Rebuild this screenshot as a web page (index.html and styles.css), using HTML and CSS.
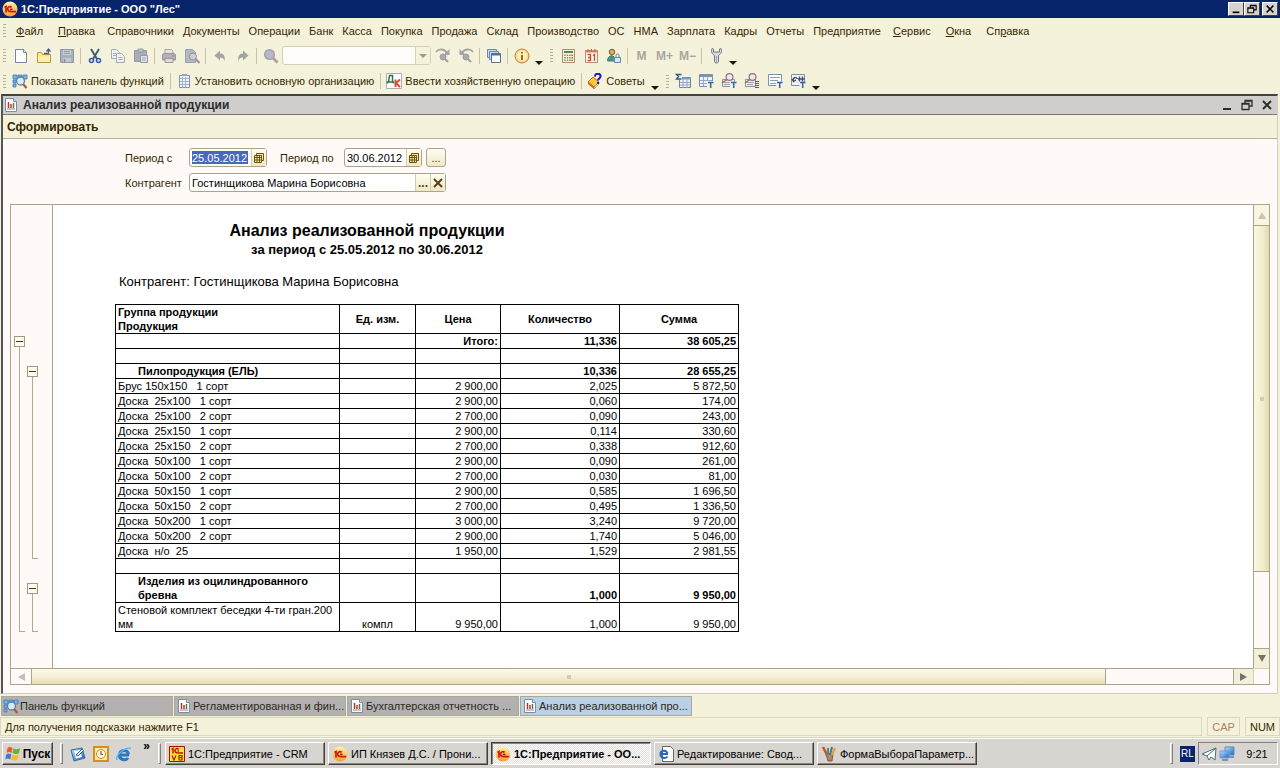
FILE: index.html
```html
<!DOCTYPE html>
<html lang="ru">
<head>
<meta charset="utf-8">
<title>1С:Предприятие - ООО "Лес"</title>
<link rel="stylesheet" href="styles.css">
</head>
<body>
<svg class="sprite" aria-hidden="true">
  <defs>
    <linearGradient id="gold" x1="0" y1="0" x2="0" y2="1"><stop offset="0" stop-color="#fff3b0"/><stop offset="1" stop-color="#f0a030"/></linearGradient>
    <linearGradient id="sky" x1="0" y1="0" x2="1" y2="1"><stop offset="0" stop-color="#b8e4ff"/><stop offset="1" stop-color="#1c62c0"/></linearGradient>
  </defs>
  <symbol id="i-1c" viewBox="0 0 16 16"><circle cx="8" cy="8" r="7.5" fill="url(#gold)"/><path d="M2.500 6.500l1.500-1v6M9.500 6.500C8.500 5 5.700 5.500 5.700 8s2 2.700 4 2.700h4.500M10.500 8.300H8" fill="none" stroke="#d01808" stroke-width="1.700"/></symbol>
  <symbol id="i-1cv8" viewBox="0 0 16 16"><path d="M.5.5h15v15H.5z" fill="#ffdf38" stroke="#a01010"/><path d="M2.500 3.500L4 2.500V7.500M9.500 3.500c-1-1.500-3.500-1-3.500 1s1 2.500 3 2.500h5M10 5H8.500" fill="none" stroke="#c81808" stroke-width="1.500"/><path d="M3 9.500l2 4.500 2-4.500M10 9.500h3v2h-3zM10 11.500h3V14h-3z" fill="none" stroke="#b01808" stroke-width="1.200"/></symbol>
  <symbol id="i-report" viewBox="0 0 16 16"><path d="M2.500 1.500h8l3 3v10h-11z" fill="#fff" stroke="#7d8ca4"/><path d="M10.500 1.500v3h3" fill="#d8e0ee" stroke="#7d8ca4"/><path d="M5.500 5v6" stroke="#b03820" stroke-width="1.500"/><path d="M8 7v4" stroke="#c03030" stroke-width="1.500"/><path d="M10.500 6v5" stroke="#507850" stroke-width="1.500"/><path d="M4 12h8" stroke="#888"/></symbol>
  <symbol id="i-new" viewBox="0 0 16 16"><path d="M2.500 1.500h8l3 3v10h-11z" fill="#fff" stroke="#7388ad"/><path d="M10.500 1.500v3h3" fill="#d4e0f4" stroke="#7388ad"/></symbol>
  <symbol id="i-open" viewBox="0 0 16 16"><path d="M1.500 4.500h4l1 2h8v8h-13z" fill="#ffe58c" stroke="#b99544"/><path d="M2 8.500h12v5.500H2z" fill="#ffefac"/><path d="M8 5.500h4.500V1.500M10.500 3.500l2-2.500 2 2.500" fill="none" stroke="#4c6480" stroke-width="1.300"/></symbol>
  <symbol id="i-save" viewBox="0 0 16 16"><path d="M1.500 1.500h13v13h-13z" fill="#a9afbb" stroke="#8f97a8"/><path d="M4 2h8v5H4z" fill="#c9ccd4"/><path d="M5 3.500h6M5 5.500h6" stroke="#959cab"/><path d="M4 10h8v4H4z" fill="#c4c8d0"/><path d="M5.500 11v3" stroke="#858c9c" stroke-width="1.500"/></symbol>
  <symbol id="i-cut" viewBox="0 0 16 16"><path d="M4 1l6 10M12 1L6 11" stroke="#41597c" stroke-width="1.900" fill="none"/><circle cx="4.500" cy="12.500" r="2" fill="none" stroke="#2d5fae" stroke-width="1.600"/><circle cx="11.500" cy="12.500" r="2" fill="none" stroke="#2d5fae" stroke-width="1.600"/></symbol>
  <symbol id="i-copy" viewBox="0 0 16 16"><g fill="#f0f0ee" stroke="#a6abb8"><path d="M1.500 1.500h5l3 3v6h-8z"/><path d="M6.500 5.500h5l3 3v6h-8z"/></g><path d="M3 5.500h3M3 7.500h3M8.500 9.500h4M8.500 11.500h4" stroke="#a6abb8"/></symbol>
  <symbol id="i-paste" viewBox="0 0 16 16"><path d="M1.500 2.500h12v11h-12z" fill="#a9adb8" stroke="#9298a6"/><path d="M5 1h5v3H5z" fill="#c8c8cc" stroke="#9298a6"/><path d="M7.500 7.500h7v7h-7z" fill="#dfe1e6" stroke="#9298a6"/><path d="M9 10h4M9 12h4" stroke="#a0a5b2"/></symbol>
  <symbol id="i-print" viewBox="0 0 16 16"><path d="M4 6V1.500h6.500L12 3v3" fill="#e6e4e2" stroke="#a8a3a4"/><path d="M1.500 6.500l1.500-1h10l1.500 1v5.500h-13z" fill="#b4b0b4" stroke="#98959c"/><path d="M4 10.500h8v4H4z" fill="#dedbd9" stroke="#98959c"/><path d="M11 8h2" stroke="#b07878"/></symbol>
  <symbol id="i-preview" viewBox="0 0 16 16"><path d="M1.500 1.500h7l3 3v10h-10z" fill="#b5b8c2" stroke="#9a9fac"/><circle cx="9" cy="8.500" r="3.500" fill="#cccfd6" stroke="#90939c"/><path d="M11.500 11l4 4" stroke="#9c9490" stroke-width="2.200"/></symbol>
  <symbol id="i-undo" viewBox="0 0 16 16"><path d="M2.500 7.500l5.500-5V5.500c4 0 5.500 3 4.500 8-.5-3-1.500-4-4.500-4v3z" fill="#a4a5a3"/></symbol>
  <symbol id="i-redo" viewBox="0 0 16 16"><path d="M13.500 7.500L8 2.500V5.500c-4 0-5.500 3-4.500 8 .5-3 1.500-4 4.500-4v3z" fill="#9ea89e"/></symbol>
  <symbol id="i-find" viewBox="0 0 16 16"><circle cx="6.500" cy="6.500" r="4.800" fill="#b7bac4" stroke="#a0a2ac" stroke-width="1.500"/><path d="M10 10l4.500 4.500" stroke="#b29d94" stroke-width="2.800"/></symbol>
  <symbol id="i-next" viewBox="0 0 16 16"><path d="M1 4c3-4 9-3 11 1" fill="none" stroke="#a4a4a4" stroke-width="1.800"/><path d="M14.500 1v6H8.500z" fill="#a4a4a4"/><circle cx="8" cy="9" r="3" fill="#a9abb2" stroke="#9b9ba1"/><path d="M10 11l3 3" stroke="#a99c96" stroke-width="2"/></symbol>
  <symbol id="i-prev" viewBox="0 0 16 16"><path d="M15 4C12 0 6 1 4 5" fill="none" stroke="#a4a4a4" stroke-width="1.800"/><path d="M1.500 1v6h6z" fill="#a4a4a4"/><circle cx="8" cy="9" r="3" fill="#a9abb2" stroke="#9b9ba1"/><path d="M10 11l3 3" stroke="#a99c96" stroke-width="2"/></symbol>
  <symbol id="i-windows" viewBox="0 0 16 16"><path d="M1.500 1.500h9v8h-9z" fill="#c8dcf0" stroke="#7089a8"/><path d="M3.500 3.500h9v8h-9z" fill="#c8dcf0" stroke="#7089a8"/><path d="M5.500 5.500h9v9h-9z" fill="#fff" stroke="#4e6f96"/><path d="M5 6.500h10" stroke="#4e6f96" stroke-width="2"/></symbol>
  <symbol id="i-info" viewBox="0 0 16 16"><circle cx="8" cy="8" r="7" fill="#fcd78a" stroke="#bf7c4e"/><circle cx="8" cy="8" r="5" fill="#fff0b0"/><path d="M8 4v1.500M8 7v5" stroke="#8d5a2c" stroke-width="1.800"/></symbol>
  <symbol id="i-calc" viewBox="0 0 16 16"><path d="M2.500 1.500h12v13h-12z" fill="#fdf4dd" stroke="#b08b6c"/><path d="M4 3h9v2H4z" fill="#508660"/><path d="M5 6.500v7M7.500 6.500v7M10 6.500v7" stroke="#6e9a58" stroke-width="1.500" stroke-dasharray="1.500 1"/><path d="M12.200 6.500v7" stroke="#cc5848" stroke-width="1.500" stroke-dasharray="1.500 1"/></symbol>
  <symbol id="i-calendar" viewBox="0 0 16 16"><path d="M2.500 2.500h12v12h-12z" fill="#fff6ed" stroke="#c48a70"/><path d="M2 3.500h13" stroke="#e08060" stroke-width="2"/><path d="M5 1v3M8.500 1v3M12 1v3" stroke="#a56a5c"/><path d="M4.500 6.500h3v6h-3M5 9.500h2.500M10 7.500l1.500-1v6.500" fill="none" stroke="#cf4c28" stroke-width="1.300"/></symbol>
  <symbol id="i-user" viewBox="0 0 16 16"><circle cx="6" cy="4" r="2.800" fill="#e7a55c" stroke="#6c6040"/><path d="M1.500 13c0-7 8-7 8 0z" fill="#4c9686" stroke="#497a77"/><path d="M8.500 9.500h6v5h-6z" fill="#dbe7f5" stroke="#6384ac"/><path d="M10 9V7.500c0-2 3-2 3 0V9" fill="none" stroke="#6384ac"/></symbol>
  <symbol id="i-wrench" viewBox="0 0 16 16"><path d="M4 .5C2.500 3 4 6 6.500 7.500v6c0 2 4 2 4 0v-6C13 6 14.500 3 13 .5l-1.500.5v3h-6V1z" fill="#d5dae0" stroke="#717781"/><path d="M8.500 8v6" stroke="#a2a8b0"/></symbol>
  <symbol id="i-panel" viewBox="0 0 16 16"><path d="M1 2h4v4H1zM6 2h4v4H6zM11 2h4v4h-4zM1 7h3v3H1zM1 11h3v3H1z" fill="#75b4e8" stroke="#3d79b8" stroke-width=".8"/><circle cx="8.500" cy="8" r="4" fill="#d6ecfa" stroke="#5d7fa0" stroke-width="1.300"/><path d="M11 11l3.500 4" stroke="#ac5b42" stroke-width="2.300"/></symbol>
  <symbol id="i-org" viewBox="0 0 16 16"><path d="M3.500 2.500h10v12h-10z" fill="#eef3fb" stroke="#8294b2"/><path d="M6 1h5v2H6z" fill="#93a4bf"/><path d="M4 5.500h9M4 8.500h9M4 11.500h9M6.500 4v10M9.500 4v10" stroke="#a3b1c9"/></symbol>
  <symbol id="i-dk" viewBox="0 0 16 16"><path d="M.5.500h15v15H.5z" fill="#fff" stroke="#a9adb5"/><path d="M1.500 10.500V9h1l1-6.500h3V9h1v1.500M2.500 9H7" fill="none" stroke="#287840" stroke-width="1.500"/><path d="M9.500 6.500V14M14 6.500L10 10l4 4" fill="none" stroke="#de4830" stroke-width="1.900"/></symbol>
  <symbol id="i-tips" viewBox="0 0 16 16"><path d="M1 9l5-5 6 5-5 5z" fill="#ffc838" stroke="#c06c18"/><path d="M1 9l6 5v2L1 11z" fill="#d05f18"/><path d="M7 14l5-5v2l-5 5z" fill="#f5e5c0" stroke="#a06a40" stroke-width=".6"/><path d="M8 3.500c0-4 6-3.500 5.500 0-.3 2-2.500 2-2.500 4M11 9v2" fill="none" stroke="#1b18b8" stroke-width="2"/></symbol>
  <symbol id="i-grid" viewBox="0 0 16 16"><path d="M4.500 4.500h11v10h-11z" fill="#eef3fa" stroke="#6b86ae"/><path d="M4 5.500h12" stroke="#7c9bc4" stroke-width="2"/><path d="M8 6v9M12 6v9M5 9.500h10M5 12h10" stroke="#94a7c4"/></symbol>
  <symbol id="i-sum" viewBox="0 0 16 16"><use href="#i-grid" width="16" height="16"/><path d="M0 0h7v7H0z" fill="#f5f2dc"/><path d="M6.500 1.500H1.500l2 2-2 2.500h5" fill="none" stroke="#2d5592" stroke-width="1.300"/></symbol>
  <symbol id="i-gridt" viewBox="0 0 16 16"><path d="M1.500 1.500h13v12h-13z" fill="#eef3fa" stroke="#7d90ae"/><path d="M1 3h14" stroke="#7c93b8" stroke-width="2"/><path d="M5.500 4v9M9.500 4v9M2 7.500h12M2 10.500h8" stroke="#94a7c4"/><path d="M9 8h7v8H9z" fill="#f5f2dc"/><path d="M10 9.500h5.500M12.700 9.500V15" stroke="#2d68ac" stroke-width="1.500"/></symbol>
  <symbol id="i-findt" viewBox="0 0 16 16"><path d="M1.500 6.500h12v7h-12z" fill="#e8eaf0" stroke="#8b93a4"/><path d="M3 9.500h7M3 11.500h6" stroke="#9ca4b4"/><circle cx="8.500" cy="4" r="3.400" fill="#f7e9e9" stroke="#8c7480" stroke-width="1.200"/><path d="M6 6.500L1 10" stroke="#a0705c" stroke-width="1.500"/><path d="M9 8.500h7V16H9z" fill="#f5f2dc"/><path d="M10 9.500h5.500M12.700 9.500V15" stroke="#2d68ac" stroke-width="1.500"/></symbol>
  <symbol id="i-findl" viewBox="0 0 16 16"><path d="M1.500 6.500h10v7h-10z" fill="#e8eaf0" stroke="#8b93a4"/><path d="M3 9.500h7M3 11.500h6" stroke="#9ca4b4"/><circle cx="8.500" cy="4" r="3.400" fill="#f7e9e9" stroke="#8c7480" stroke-width="1.200"/><path d="M6 6.500L1 10" stroke="#a0705c" stroke-width="1.500"/><path d="M11 8.500h4M11 10.500h4M11 12.500h4M11 14.500h4" stroke="#625a52"/></symbol>
  <symbol id="i-doct" viewBox="0 0 16 16"><path d="M1.500 1.500h13v11h-13z" fill="#fff" stroke="#7d90ae"/><path d="M3 4.500h10M3 7.500h8M3 10.500h6" stroke="#8ca0c0"/><path d="M9 8.500h7V16H9z" fill="#f5f2dc"/><path d="M10 9.500h5.500M12.700 9.500V15" stroke="#2d68ac" stroke-width="1.500"/></symbol>
  <symbol id="i-movet" viewBox="0 0 16 16"><path d="M1.500 1.500h13v11h-13z" fill="#eef2f8" stroke="#7d90ae"/><path d="M3.500 8c-1-4 3-4 4-2M2 6l1.500 2.500L6 7M9.500 3.500v5M12.500 3.500v5M8 6h6.500" fill="none" stroke="#4a4a5a" stroke-width="1.300"/><path d="M9.500 9h6v6h-6z" fill="#f5f2dc"/><path d="M10 9.500h5.500M12.700 9.500V15" stroke="#2d68ac" stroke-width="1.500"/></symbol>
  <symbol id="i-cells" viewBox="0 0 12 12"><path d="M3.500 1.500h7v7h-7z" fill="#f4e3a2" stroke="#6a5410"/><path d="M1.500 3.500h7v7h-7z" fill="#f9ecb8" stroke="#6a5410"/><path d="M1 5.500h8M1 8h8M4 3v8M6.500 3v8" stroke="#6a5410"/></symbol>
  <symbol id="i-min" viewBox="0 0 12 12"><path d="M2 10h8" stroke="currentColor" stroke-width="2"/></symbol>
  <symbol id="i-restore" viewBox="0 0 12 12"><path d="M4 4V1.500h7v5.500H8M4 2h7.500" fill="none" stroke="currentColor" stroke-width="1.300"/><path d="M1 4.500h7v6H1zM1 5h7" fill="none" stroke="currentColor" stroke-width="1.300"/></symbol>
  <symbol id="i-close" viewBox="0 0 12 12"><path d="M2 2l8 8M10 2l-8 8" stroke="currentColor" stroke-width="1.900"/></symbol>
  <symbol id="i-flag" viewBox="0 0 16 16"><path d="M2.500 2c2-1.500 3-1 5 0l-1 5c-2-1-3-1.500-5 0z" fill="#e85c28"/><path d="M8.500 2.500c2 1 4 1 6.500-.5l-1 5c-2 1.500-4 1-6.500 0z" fill="#68b034"/><path d="M1.300 8.500c2-1.500 3-1 5 0l-1 5c-2-1-3-1.500-5 0z" fill="#3c78d8"/><path d="M7.200 8.500c2 1 4 1.500 6.500 0l-1 5c-2 1.500-4 1-6.500 0z" fill="#f8bc20"/></symbol>
  <symbol id="i-desktop" viewBox="0 0 16 16"><path d="M1 4l11-2 3 10-11 3z" fill="url(#sky)" stroke="#2a6fa8"/><path d="M4 5l6-1 2 7-6 1.500z" fill="#fff"/><path d="M6 9l6-6 1.500 1.500L8 10z" fill="#e4f0f8" stroke="#346088"/></symbol>
  <symbol id="i-clock" viewBox="0 0 16 16"><path d="M1 1h14v14H1z" fill="#ffe9aa" stroke="#d68e20" stroke-width="2"/><circle cx="8" cy="8" r="4.500" fill="#fff9e0" stroke="#c88a30"/><path d="M8 5v3.500h2" fill="none" stroke="#8d6020" stroke-width="1.200"/></symbol>
  <symbol id="i-ie" viewBox="0 0 16 16"><path d="M3 9h10M12.500 8.500C12 3 4 3 3.500 9c-.3 5 6.500 6 8.500 3" fill="none" stroke="#267ac4" stroke-width="3"/><path d="M1 14C-1 10 8 1 15 2.500" fill="none" stroke="#62b4ec" stroke-width="1.500"/></symbol>
  <symbol id="i-iepage" viewBox="0 0 16 16"><path d="M4.500.5h8l3 3v12h-11z" fill="#fff" stroke="#666"/><path d="M3 8h7M9.500 7.500C8 3.500 2.500 4 2.500 8s5 5 7 2.500" fill="none" stroke="#2268bc" stroke-width="2"/></symbol>
  <symbol id="i-paint" viewBox="0 0 16 16"><path d="M5 8l7-1-1 8H7z" fill="#b08460" stroke="#805a48"/><path d="M2 1l4 8" stroke="#d44c38" stroke-width="2.500"/><path d="M7 2v7" stroke="#4c9a44" stroke-width="2"/><path d="M11 1L9 9" stroke="#4d70c0" stroke-width="2"/><path d="M14 2l-3 7" stroke="#e0a838" stroke-width="2.500"/></symbol>
  <symbol id="i-plane" viewBox="0 0 16 16"><path d="M1 8l14-6-1 12-4-3-2 3-2-4z" fill="#fff" stroke="#447078"/><path d="M15 2L6 10" stroke="#447078"/></symbol>
  <symbol id="i-net" viewBox="0 0 16 16"><path d="M6 1h9v8H6z" fill="url(#sky)" stroke="#5e88c0"/><path d="M1 5h9v7H1z" fill="url(#sky)" stroke="#7098cc"/><path d="M3 14h6M10 11h5" stroke="#7e93b8" stroke-width="2"/></symbol>
</svg>

<header class="titlebar">
  <svg class="icon"><use href="#i-1c"/></svg>
  <h1>1С:Предприятие - ООО "Лес"</h1>
  <div class="caption-buttons">
    <button aria-label="Свернуть"><svg><use href="#i-min"/></svg></button>
    <button aria-label="Восстановить"><svg><use href="#i-restore"/></svg></button>
    <button class="apart" aria-label="Закрыть"><svg><use href="#i-close"/></svg></button>
  </div>
</header>

<nav class="menu">
  <i class="grip"></i>
  <button class="key"><u>Ф</u>айл</button>
  <button class="key"><u>П</u>равка</button>
  <button>Справочники</button>
  <button>Документы</button>
  <button>Операции</button>
  <button>Банк</button>
  <button>Касса</button>
  <button>Покупка</button>
  <button>Продажа</button>
  <button>Склад</button>
  <button>Производство</button>
  <button>ОС</button>
  <button>НМА</button>
  <button>Зарплата</button>
  <button>Кадры</button>
  <button>Отчеты</button>
  <button>Предприятие</button>
  <button class="key"><u>С</u>ервис</button>
  <button class="key"><u>О</u>кна</button>
  <button class="key">Сп<u>р</u>авка</button>
</nav>

<div class="toolbar">
  <i class="grip"></i>
  <button class="tool" aria-label="Новый"><svg class="icon"><use href="#i-new"/></svg></button>
  <button class="tool" aria-label="Открыть"><svg class="icon"><use href="#i-open"/></svg></button>
  <button class="tool" aria-label="Сохранить"><svg class="icon"><use href="#i-save"/></svg></button>
  <i class="sep"></i>
  <button class="tool" aria-label="Вырезать"><svg class="icon"><use href="#i-cut"/></svg></button>
  <button class="tool" aria-label="Копировать"><svg class="icon"><use href="#i-copy"/></svg></button>
  <button class="tool" aria-label="Вставить"><svg class="icon"><use href="#i-paste"/></svg></button>
  <i class="sep"></i>
  <button class="tool" aria-label="Печать"><svg class="icon"><use href="#i-print"/></svg></button>
  <button class="tool" aria-label="Просмотр"><svg class="icon"><use href="#i-preview"/></svg></button>
  <i class="sep"></i>
  <button class="tool" aria-label="Отменить"><svg class="icon"><use href="#i-undo"/></svg></button>
  <button class="tool" aria-label="Повторить"><svg class="icon"><use href="#i-redo"/></svg></button>
  <i class="sep"></i>
  <button class="tool" aria-label="Найти"><svg class="icon"><use href="#i-find"/></svg></button>
  <div class="combo"><input type="text" aria-label="Строка поиска"><button aria-label="История поиска"><i class="down dim"></i></button></div>
  <button class="tool" aria-label="Найти далее"><svg class="icon"><use href="#i-next"/></svg></button>
  <button class="tool" aria-label="Найти назад"><svg class="icon"><use href="#i-prev"/></svg></button>
  <i class="sep"></i>
  <button class="tool" aria-label="Окна"><svg class="icon"><use href="#i-windows"/></svg></button>
  <i class="sep"></i>
  <button class="tool" aria-label="Справка"><svg class="icon"><use href="#i-info"/></svg></button>
  <button class="more" aria-label="Еще"><i class="down"></i></button>
  <i class="grip inner"></i>
  <button class="tool" aria-label="Калькулятор"><svg class="icon"><use href="#i-calc"/></svg></button>
  <button class="tool" aria-label="Календарь"><svg class="icon"><use href="#i-calendar"/></svg></button>
  <button class="tool" aria-label="Пользователи"><svg class="icon"><use href="#i-user"/></svg></button>
  <i class="sep"></i>
  <button class="tool mem">M</button>
  <button class="tool mem">M+</button>
  <button class="tool mem">M−</button>
  <i class="sep"></i>
  <button class="tool" aria-label="Настройка"><svg class="icon"><use href="#i-wrench"/></svg></button>
  <button class="more" aria-label="Еще"><i class="down"></i></button>
</div>

<div class="toolbar">
  <i class="grip"></i>
  <button class="command"><svg class="icon"><use href="#i-panel"/></svg>Показать панель функций</button>
  <i class="sep"></i>
  <button class="command"><svg class="icon"><use href="#i-org"/></svg>Установить основную организацию</button>
  <i class="sep"></i>
  <button class="command"><svg class="icon"><use href="#i-dk"/></svg>Ввести хозяйственную операцию</button>
  <i class="sep"></i>
  <button class="command"><svg class="icon"><use href="#i-tips"/></svg>Советы</button>
  <button class="more" aria-label="Еще"><i class="down"></i></button>
  <i class="grip inner"></i>
  <button class="tool" aria-label="Итоги"><svg class="icon"><use href="#i-sum"/></svg></button>
  <button class="tool" aria-label="Таблица"><svg class="icon"><use href="#i-gridt"/></svg></button>
  <button class="tool" aria-label="Отбор"><svg class="icon"><use href="#i-findt"/></svg></button>
  <button class="tool" aria-label="Список"><svg class="icon"><use href="#i-findl"/></svg></button>
  <button class="tool" aria-label="Документ"><svg class="icon"><use href="#i-doct"/></svg></button>
  <button class="tool" aria-label="Обороты"><svg class="icon"><use href="#i-movet"/></svg></button>
  <button class="more" aria-label="Еще"><i class="down"></i></button>
</div>

<main class="window">
  <div class="window-title">
    <svg class="icon"><use href="#i-report"/></svg>
    <h2>Анализ реализованной продукции</h2>
    <button aria-label="Свернуть окно"><svg><use href="#i-min"/></svg></button>
    <button aria-label="Восстановить окно"><svg><use href="#i-restore"/></svg></button>
    <button aria-label="Закрыть окно"><svg><use href="#i-close"/></svg></button>
  </div>
  <div class="commands"><button>Сформировать</button></div>

  <form class="filter">
    <div class="filter-row">
      <label for="from">Период с</label>
      <div class="field date"><input class="selected" id="from" value="25.05.2012"><button type="button" aria-label="Выбрать начало"><svg><use href="#i-cells"/></svg></button></div>
      <label class="second" for="to">Период по</label>
      <div class="field date"><input id="to" value="30.06.2012"><button type="button" aria-label="Выбрать конец"><svg><use href="#i-cells"/></svg></button></div>
      <button class="dots" type="button">...</button>
    </div>
    <div class="filter-row">
      <label for="partner">Контрагент</label>
      <div class="field partner"><input id="partner" value="Гостинщикова Марина Борисовна"><button class="pick" type="button">...</button><button type="button" aria-label="Очистить"><svg><use href="#i-close"/></svg></button></div>
    </div>
  </form>

  <section class="sheet">
    <div class="outline">
      <div class="level">
        <div class="node total"><button aria-label="Свернуть итог"></button></div>
      </div>
      <div class="level">
        <div class="node group-one"><button aria-label="Свернуть группу"></button></div>
        <div class="node group-two"><button aria-label="Свернуть группу"></button></div>
      </div>
    </div>
    <div class="page">
      <div class="heading">
        <h3>Анализ реализованной продукции</h3>
        <h4>за период с 25.05.2012 по 30.06.2012</h4>
      </div>
      <p class="subject">Контрагент: Гостинщикова Марина Борисовна</p>
      <table>
        <colgroup><col class="c-name"><col class="c-unit"><col class="c-price"><col class="c-sum"><col class="c-sum"></colgroup>
        <thead>
          <tr class="tall"><th class="name">Группа продукции<br>Продукция</th><th>Ед. изм.</th><th>Цена</th><th>Количество</th><th>Сумма</th></tr>
        </thead>
        <tbody>
          <tr class="bold"><td></td><td></td><td>Итого:</td><td>11,336</td><td>38 605,25</td></tr>
          <tr><td></td><td></td><td></td><td></td><td></td></tr>
          <tr class="bold"><td class="group">Пилопродукция (ЕЛЬ)</td><td></td><td></td><td>10,336</td><td>28 655,25</td></tr>
          <tr><td>Брус 150x150   1 сорт</td><td></td><td>2 900,00</td><td>2,025</td><td>5 872,50</td></tr>
          <tr><td>Доска  25x100   1 сорт</td><td></td><td>2 900,00</td><td>0,060</td><td>174,00</td></tr>
          <tr><td>Доска  25x100   2 сорт</td><td></td><td>2 700,00</td><td>0,090</td><td>243,00</td></tr>
          <tr><td>Доска  25x150   1 сорт</td><td></td><td>2 900,00</td><td>0,114</td><td>330,60</td></tr>
          <tr><td>Доска  25x150   2 сорт</td><td></td><td>2 700,00</td><td>0,338</td><td>912,60</td></tr>
          <tr><td>Доска  50x100   1 сорт</td><td></td><td>2 900,00</td><td>0,090</td><td>261,00</td></tr>
          <tr><td>Доска  50x100   2 сорт</td><td></td><td>2 700,00</td><td>0,030</td><td>81,00</td></tr>
          <tr><td>Доска  50x150   1 сорт</td><td></td><td>2 900,00</td><td>0,585</td><td>1 696,50</td></tr>
          <tr><td>Доска  50x150   2 сорт</td><td></td><td>2 700,00</td><td>0,495</td><td>1 336,50</td></tr>
          <tr><td>Доска  50x200   1 сорт</td><td></td><td>3 000,00</td><td>3,240</td><td>9 720,00</td></tr>
          <tr><td>Доска  50x200   2 сорт</td><td></td><td>2 900,00</td><td>1,740</td><td>5 046,00</td></tr>
          <tr><td>Доска  н/о  25</td><td></td><td>1 950,00</td><td>1,529</td><td>2 981,55</td></tr>
          <tr><td></td><td></td><td></td><td></td><td></td></tr>
          <tr class="bold tall"><td class="group">Изделия из оцилиндрованного бревна</td><td></td><td></td><td>1,000</td><td>9 950,00</td></tr>
          <tr class="tall"><td>Стеновой комплект беседки 4-ти гран.200 мм</td><td>компл</td><td>9 950,00</td><td>1,000</td><td>9 950,00</td></tr>
        </tbody>
      </table>
    </div>
    <div class="vscroll"><button aria-label="Вверх"><i class="tri up"></i></button><div class="vthumb"><i></i></div><div class="vtrack"></div><button aria-label="Вниз"><i class="tri south"></i></button></div>
    <div class="hscroll"><button aria-label="Влево"><i class="tri west"></i></button><div class="hthumb"><i></i></div><div class="htrack"></div><button aria-label="Вправо"><i class="tri east"></i></button></div>
    <div class="corner"></div>
  </section>
</main>

<nav class="tabs">
  <button class="tight"><svg class="icon"><use href="#i-panel"/></svg>Панель функций</button>
  <button><svg class="icon"><use href="#i-report"/></svg>Регламентированная и фин...</button>
  <button><svg class="icon"><use href="#i-report"/></svg>Бухгалтерская отчетность ...</button>
  <button class="active"><svg class="icon"><use href="#i-report"/></svg>Анализ реализованной про...</button>
</nav>

<div class="status"><span class="hint">Для получения подсказки нажмите F1</span><span class="off">CAP</span><span>NUM</span></div>

<footer class="taskbar">
  <button class="start"><svg class="icon"><use href="#i-flag"/></svg>Пуск</button>
  <i class="ridge"></i>
  <div class="quick">
    <button aria-label="Рабочий стол"><svg class="icon"><use href="#i-desktop"/></svg></button>
    <button aria-label="Планировщик"><svg class="icon"><use href="#i-clock"/></svg></button>
    <button aria-label="Обозреватель"><svg class="icon"><use href="#i-ie"/></svg></button>
    <button class="chevron">»</button>
  </div>
  <i class="ridge"></i>
  <div class="tasks">
    <button><svg class="icon"><use href="#i-1cv8"/></svg>1С:Предприятие - CRM</button>
    <button><svg class="icon"><use href="#i-1c"/></svg>ИП Князев Д.С. / Прони...</button>
    <button class="pressed"><svg class="icon"><use href="#i-1c"/></svg>1С:Предприятие - ОО...</button>
    <button><svg class="icon"><use href="#i-iepage"/></svg>Редактирование: Свод...</button>
    <button><svg class="icon"><use href="#i-paint"/></svg>ФормаВыбораПараметр...</button>
  </div>
  <i class="ridge"></i>
  <span class="lang">RL</span>
  <div class="tray"><svg class="icon"><use href="#i-plane"/></svg><svg class="icon"><use href="#i-net"/></svg><time>9:21</time></div>
</footer>
</body>
</html>
```
FILE: styles.css
```css
* { box-sizing: border-box; }

:root {
  --beige: #f5f2dc;
  --form: #fffaf7;
  --line: #a9a58c;
  --ink: #352800;
}

body {
  margin: 0;
  height: 100vh;
  display: flex;
  flex-direction: column;
  overflow: hidden;
  background: var(--beige);
  color: var(--ink);
  font: 11px/14px "Liberation Sans", Arial, sans-serif;
}

h1, h2, h3, h4, p { margin: 0; font-size: inherit; }

button, input {
  margin: 0;
  padding: 0;
  border: 0;
  background: none;
  color: inherit;
  font: inherit;
}

button { display: flex; align-items: center; justify-content: center; white-space: nowrap; }
input { min-width: 0; }
svg { display: block; width: 12px; height: 12px; }
.icon { width: 16px; height: 16px; flex: none; }
.sprite { position: absolute; width: 0; height: 0; }

/* application caption */
.titlebar {
  flex: none;
  display: flex;
  align-items: center;
  gap: 3px;
  height: 18px;
  padding: 0 2px;
  background: #08246b;
  color: #fff;
}
.titlebar h1 { flex: 1; }
.caption-buttons { display: flex; }
.caption-buttons button {
  width: 16px;
  height: 14px;
  background: #d6d2ce;
  border: 1px solid;
  border-color: #fff #404040 #404040 #fff;
  color: #000;
}
.caption-buttons svg { width: 10px; height: 10px; }
.caption-buttons .apart { margin-left: 2px; }

/* menu and toolbars */
.menu { flex: none; display: flex; align-items: center; gap: 9px; height: 25px; padding-left: 3px; }
.menu .key { padding: 0 3px; }
.menu .grip { margin-right: -2px; }
.toolbar { flex: none; display: flex; align-items: center; height: 25px; padding-left: 3px; }
.toolbar + .toolbar { height: 26px; }
.grip { flex: none; width: 3px; height: 13px; background: repeating-linear-gradient(#b4ae90 0 1px, transparent 1px 3px); }
.toolbar > .grip { margin-right: 3px; }
.toolbar > .inner { margin: 0 3px 0 5px; }
.sep { flex: none; width: 1px; height: 16px; margin: 0 2px; background: #c8c3a4; }
.tool { flex: none; width: 23px; height: 22px; }
.mem { color: #a9a89f; font-size: 12px; font-weight: bold; }
.more { flex: none; width: 12px; height: 18px; align-items: flex-end; }
.down { border: 4px solid transparent; border-top-color: #1c1808; border-bottom: 0; }
.down.dim { border-top-color: #a09888; }
.command { gap: 3px; height: 22px; padding: 0 4px 0 3px; }
.combo {
  display: flex;
  width: 149px;
  height: 19px;
  border: 1px solid #d5cfb4;
  border-radius: 3px;
  background: #fffdfa;
}
.combo input { flex: 1; }
.combo button { width: 15px; background: var(--beige); border-left: 1px solid #d5cfb4; }

/* document window */
.window {
  flex: 1;
  min-height: 0;
  display: flex;
  flex-direction: column;
  margin: 0 2px 0 1px;
  border: 1px solid #d0cfc0;
  border-left: 2px solid #55555a;
  border-top: 2px solid #44443c;
  background: var(--form);
}
.window-title {
  flex: none;
  display: flex;
  align-items: center;
  height: 19px;
  background: #d0cecd;
  border-bottom: 1px solid #77776c;
  color: #2c2c2c;
}
.window-title h2 { flex: 1; padding-left: 4px; font-size: 12px; }
.window-title button { width: 20px; height: 18px; }
.commands {
  flex: none;
  display: flex;
  height: 24px;
  padding-left: 4px;
  background: var(--beige);
  border-bottom: 1px solid #b5b196;
}
.commands button { font-size: 12px; font-weight: bold; }

.filter { flex: none; display: flex; flex-direction: column; gap: 6px; padding: 9px 0 12px 122px; }
.filter-row { display: flex; align-items: center; height: 19px; }
.filter label { width: 64px; white-space: nowrap; }
.filter .second { margin-left: 13px; }
.field {
  display: flex;
  height: 19px;
  border: 1px solid var(--line);
  border-radius: 3px;
  background: #fff;
  color: #000;
}
.field input { flex: 1; margin: 2px 3px 2px 2px; }
.field .selected { background: #4a68b8; color: #fff; }
.field button, .dots {
  width: 15px;
  background: linear-gradient(#fffdf4, #f0e8c4);
  border-left: 1px solid #d3cda8;
  color: #54430c;
}
.date { width: 78px; }
.partner { width: 257px; }
.field .pick { font-size: 12px; font-weight: bold; }
.dots { width: 20px; height: 19px; margin-left: 4px; border: 1px solid var(--line); border-radius: 3px; }

/* spreadsheet area */
.sheet {
  flex: 1;
  min-height: 0;
  display: grid;
  grid-template: minmax(0, 1fr) 16px / 42px minmax(0, 1fr) 16px;
  margin: 0 7px 8px;
  border: 1px solid var(--line);
}
.outline { display: flex; gap: 2px; padding-left: 3px; border-right: 1px solid var(--line); }
.level { width: 11px; }
.node { position: relative; display: flex; }
.node::after {
  content: "";
  flex: 1;
  margin: 11px 0 0 -6px;
  border: solid #b0ab90;
  border-width: 0 0 1px 1px;
}
.node button { width: 11px; height: 11px; flex: none; border: 1px solid #a09b7c; background: #fffdf2; }
.node button::before { content: ""; width: 7px; height: 1px; background: #40391c; }
.total { margin-top: 131px; height: 296px; }
.group-one { margin-top: 161px; height: 193px; }
.group-two { margin-top: 24px; height: 49px; }

.page { overflow: hidden; padding: 16px 0 0 62px; background: #fff; color: #000; }
.heading { width: 504px; text-align: center; }
.heading h3 { font-size: 16px; line-height: 20px; }
.heading h4 { font-size: 13px; line-height: 17px; }
.subject { padding: 15px 0 14px 4px; font-size: 13px; line-height: 17px; }

table { width: 624px; table-layout: fixed; border-collapse: collapse; font-size: 11px; line-height: 14px; }
.c-name { width: 224px; }
.c-unit { width: 76px; }
.c-price { width: 85px; }
.c-sum { width: 119px; }
tr { height: 15px; }
.tall { height: 29px; }
th, td { padding: 0 2px; border: 1px solid #000; white-space: pre; vertical-align: bottom; text-align: right; }
th { vertical-align: middle; text-align: center; }
td:first-child, th.name { text-align: left; white-space: pre-wrap; }
td:nth-child(2) { text-align: center; }
td.group { padding-left: 22px; }
.bold { font-weight: bold; }

/* scroll bars */
.vscroll { display: flex; flex-direction: column; border-left: 1px solid var(--line); background: var(--form); }
.vscroll button { height: 20px; background: #f8f5e2; }
.vthumb { flex: 347; display: flex; align-items: center; justify-content: center; border: solid var(--line); border-width: 1px 0; background: linear-gradient(90deg, #fbf8e2, #f2ecca 60%, #e2dbae); }
.vtrack { flex: 76; }
.vscroll button:last-child { border-top: 1px solid var(--line); background: #f3f0da; }
.vthumb i, .hthumb i { width: 4px; height: 4px; background: #d3ccae; }
.hscroll { grid-column: 1 / 3; display: flex; border-top: 1px solid var(--line); background: var(--form); }
.hscroll button { width: 20px; }
.hthumb { flex: 1074; display: flex; align-items: center; justify-content: center; border: solid var(--line); border-width: 0 1px; background: linear-gradient(#fdfaee, #f6eed2 50%, #e8ddb4); }
.htrack { flex: 127; }
.hscroll button:last-child { border-left: 1px solid var(--line); background: #f3f0da; }
.corner { border: solid #d5d0b4; border-width: 1px 0 0 1px; }
.tri { border: 4px solid transparent; }
.up { border-top: 0; border-bottom: 7px solid #c9c4b4; }
.south { border-bottom: 0; border-top: 7px solid #77736a; }
.west { border-left: 0; border-right: 7px solid #c4c0b8; }
.east { border-right: 0; border-left: 7px solid #77736a; }

/* window tabs and status line */
.tabs { flex: none; display: flex; gap: 1px; height: 23px; padding: 2px 0 1px 1px; }
.tabs button {
  width: 172px;
  justify-content: flex-start;
  gap: 1px;
  padding-left: 1px;
  background: #b3b1b0;
  border: 1px solid #aaa89c;
  color: #2c2820;
}
.tabs .active { background: #bad0e4; }
.status { flex: none; display: flex; gap: 5px; height: 21px; padding-bottom: 1px; border-bottom: 1px solid #dbd7c6; }
.status span { display: flex; align-items: center; padding: 0 4px; border: 1px solid #ddd8bc; }
.status .hint { flex: 1; }
.status .off { color: #a98463; }

/* desktop taskbar */
.taskbar {
  flex: none;
  display: flex;
  align-items: center;
  height: 30px;
  padding: 0 2px;
  background: #d8d4d0;
  border-top: 1px solid #fff;
  color: #000;
}
.start, .tasks button {
  height: 23px;
  border: 1px solid;
  border-color: #fff #404040 #404040 #fff;
  box-shadow: inset -1px -1px #88847e;
}
.start { width: 51px; gap: 2px; font-size: 12px; font-weight: bold; }
.ridge { flex: none; width: 3px; height: 21px; border: 1px solid; border-color: #fff #808080 #808080 #fff; }
.start + .ridge { margin: 0 3px 0 7px; }
.quick { display: flex; align-items: center; }
.quick button { width: 23px; height: 22px; }
.quick .chevron { height: 30px; align-items: flex-start; font-size: 12px; font-weight: bold; }
.quick + .ridge { margin-right: 4px; }
.tasks { flex: 1; min-width: 0; display: flex; gap: 3px; }
.tasks button { width: 160px; justify-content: flex-start; gap: 3px; padding-left: 3px; }
.tasks .pressed {
  background: repeating-conic-gradient(#fff 0 25%, #e2dfda 0 50%) 0 0 / 2px 2px;
  border-color: #404040 #fff #fff #404040;
  box-shadow: inset 1px 1px #88847e;
  font-weight: bold;
}
.lang { margin: 0 3px 0 7px; width: 15px; height: 16px; background: #08246b; color: #fff; font-size: 10px; line-height: 16px; text-align: center; }
.tray { display: flex; align-items: center; gap: 2px; width: 80px; height: 23px; padding-left: 2px; border: 1px solid; border-color: #808080 #fff #fff #808080; }
.tray time { flex: 1; text-align: center; }
```
